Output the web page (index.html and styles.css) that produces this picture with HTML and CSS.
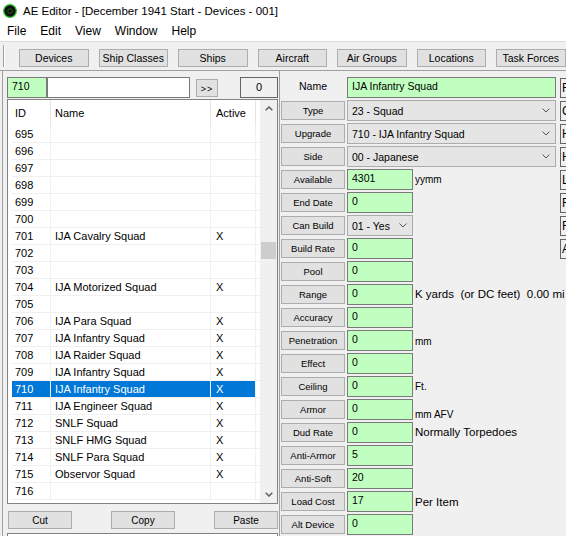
FILE: index.html
```html
<!DOCTYPE html>
<html lang="en">

<head>
    <meta charset="UTF-8">
    <title>AE Editor</title>
    <link rel="stylesheet" href="styles.css">
</head>

<body>
    <div class="titlebar">
        <svg class="app-icon" width="14" height="14" viewBox="0 0 14 14">
            <circle cx="7" cy="7" r="6.3" fill="#111" stroke="#2ec42e" stroke-width="1.2" />
            <circle cx="7" cy="7" r="2.2" fill="#050505" stroke="#1f7a1f" stroke-width="0.9" />
        </svg>
        <span class="title-text">AE Editor - [December 1941 Start - Devices - 001]</span>
    </div>

    <div class="menubar">
        <span class="menu-item">File</span>
        <span class="menu-item">Edit</span>
        <span class="menu-item">View</span>
        <span class="menu-item">Window</span>
        <span class="menu-item">Help</span>
    </div>

    <div class="toolbar">
        <div class="grip"></div>
        <div class="tb-buttons">
            <div class="btn tb-btn">Devices</div>
            <div class="btn tb-btn">Ship Classes</div>
            <div class="btn tb-btn">Ships</div>
            <div class="btn tb-btn">Aircraft</div>
            <div class="btn tb-btn">Air Groups</div>
            <div class="btn tb-btn">Locations</div>
            <div class="btn tb-btn">Task Forces</div>
        </div>
    </div>

    <div class="main">
        <div class="left-pane">
            <div class="search-row">
                <div class="field green id-field">710</div>
                <div class="field search-box"></div>
                <div class="btn next-btn">&gt;&gt;</div>
                <div class="count-box">0</div>
            </div>

            <div class="list">
                <div class="list-body">
                    <div class="list-head">
                        <div class="c-id">ID</div>
                        <div class="c-name">Name</div>
                        <div class="c-active">Active</div>
                        <div class="c-fill"></div>
                    </div>
                    <div id="rows"></div>
                </div>
                <div class="scrollbar">
                    <div class="sb-arrow">
                        <svg width="8" height="5" viewBox="0 0 8 5">
                            <polyline points="0.7,4.3 4,1 7.3,4.3" fill="none" stroke="#606060" stroke-width="1.5" />
                        </svg>
                    </div>
                    <div class="sb-thumb"></div>
                    <div class="sb-arrow sb-down">
                        <svg width="8" height="5" viewBox="0 0 8 5">
                            <polyline points="0.7,0.7 4,4 7.3,0.7" fill="none" stroke="#606060" stroke-width="1.5" />
                        </svg>
                    </div>
                </div>
            </div>

            <div class="edit-buttons">
                <div class="btn edit-btn">Cut</div>
                <div class="btn edit-btn">Copy</div>
                <div class="btn edit-btn">Paste</div>
            </div>
            <div class="bottom-box"></div>
        </div>

        <div class="right-pane">
            <div class="form">
                <div class="name-label">Name</div>
                <div class="field green wide">IJA Infantry Squad</div>
                <div class="strip">F</div>

                <div class="btn label">Type</div>
                <div class="select wide"><span>23 - Squad</span><svg width="8" height="5" viewBox="0 0 8 5"><polyline points="0.5,0.5 4,4 7.5,0.5" fill="none" stroke="#555" /></svg></div>
                <div class="strip">C</div>

                <div class="btn label">Upgrade</div>
                <div class="select wide"><span>710 - IJA Infantry Squad</span><svg width="8" height="5" viewBox="0 0 8 5"><polyline points="0.5,0.5 4,4 7.5,0.5" fill="none" stroke="#555" /></svg></div>
                <div class="strip">H</div>

                <div class="btn label">Side</div>
                <div class="select wide"><span>00 - Japanese</span><svg width="8" height="5" viewBox="0 0 8 5"><polyline points="0.5,0.5 4,4 7.5,0.5" fill="none" stroke="#555" /></svg></div>
                <div class="strip">H</div>

                <div class="btn label">Available</div>
                <div class="field green">4301</div>
                <div class="note small short">yymm</div>
                <div class="strip">L</div>

                <div class="btn label">End Date</div>
                <div class="field green">0</div>
                <div class="strip">F</div>

                <div class="btn label">Can Build</div>
                <div class="select"><span>01 - Yes</span><svg width="8" height="5" viewBox="0 0 8 5"><polyline points="0.5,0.5 4,4 7.5,0.5" fill="none" stroke="#555" /></svg></div>
                <div class="strip">F</div>

                <div class="btn label">Build Rate</div>
                <div class="field green">0</div>
                <div class="strip">A</div>

                <div class="btn label">Pool</div>
                <div class="field green">0</div>

                <div class="btn label">Range</div>
                <div class="field green">0</div>
                <div class="note">K yards &nbsp;(or DC feet) &nbsp;0.00 mi</div>

                <div class="btn label">Accuracy</div>
                <div class="field green">0</div>

                <div class="btn label">Penetration</div>
                <div class="field green">0</div>
                <div class="note small low">mm</div>

                <div class="btn label">Effect</div>
                <div class="field green">0</div>

                <div class="btn label">Ceiling</div>
                <div class="field green">0</div>
                <div class="note small">Ft.</div>

                <div class="btn label">Armor</div>
                <div class="field green">0</div>
                <div class="note small lower">mm AFV</div>

                <div class="btn label">Dud Rate</div>
                <div class="field green">0</div>
                <div class="note">Normally Torpedoes</div>

                <div class="btn label">Anti-Armor</div>
                <div class="field green">5</div>

                <div class="btn label">Anti-Soft</div>
                <div class="field green">20</div>

                <div class="btn label">Load Cost</div>
                <div class="field green">17</div>
                <div class="note low">Per Item</div>

                <div class="btn label">Alt Device</div>
                <div class="field green">0</div>
            </div>
        </div>
    </div>

    <script>
        const devices = {
            701: 'IJA Cavalry Squad',
            704: 'IJA Motorized Squad',
            706: 'IJA Para Squad',
            707: 'IJA Infantry Squad',
            708: 'IJA Raider Squad',
            709: 'IJA Infantry Squad',
            710: 'IJA Infantry Squad',
            711: 'IJA Engineer Squad',
            712: 'SNLF Squad',
            713: 'SNLF HMG Squad',
            714: 'SNLF Para Squad',
            715: 'Observor Squad'
        };
        const selectedId = 710;
        const rowsElement = document.getElementById('rows');

        for (let id = 695; id <= 716; id++) {
            const name = devices[id] || '';
            const row = document.createElement('div');
            row.className = 'list-row' + (id === selectedId ? ' selected' : '');
            row.innerHTML =
                `<div class="c-id">${id}</div>` +
                `<div class="c-name">${name}</div>` +
                `<div class="c-active">${name ? 'X' : ''}</div>` +
                `<div class="c-fill"></div>`;
            rowsElement.appendChild(row);
        }
    </script>
</body>

</html>
```

FILE: styles.css
```css
* {
    box-sizing: border-box;
}

body {
    margin: 0;
    width: 566px;
    height: 536px;
    overflow: hidden;
    background-color: #f0f0f0;
    font-family: "Liberation Sans", Arial, sans-serif;
    font-size: 11px;
    color: #000;
}

/* window chrome */

.titlebar {
    height: 22px;
    background-color: #fff;
    display: flex;
    align-items: center;
    padding-left: 3px;
    font-size: 11.5px;
}

.app-icon {
    margin-right: 6px;
}

.menubar {
    height: 19px;
    background-color: #fff;
    display: flex;
    font-size: 12px;
    line-height: 19px;
}

.menu-item {
    padding: 0 7px;
}

.toolbar {
    height: 30px;
    border-top: 1px solid #dadada;
    border-bottom: 1px solid #a0a0a0;
    display: flex;
    align-items: flex-start;
    padding-left: 3px;
}

.grip {
    width: 2px;
    height: 22px;
    margin-top: 3px;
    border-left: 1px solid #a0a0a0;
    border-right: 1px solid #fff;
}

.tb-buttons {
    display: flex;
    gap: 10px;
    margin-left: 14px;
    margin-top: 7px;
}

.btn {
    background-color: #e1e1e1;
    border: 1px solid #adadad;
    display: flex;
    justify-content: center;
    align-items: center;
    white-space: nowrap;
}

.tb-btn {
    width: 69.5px;
    height: 18px;
    font-size: 10.5px;
}

/* main area */

.main {
    height: 465px;
    display: flex;
    overflow: hidden;
}

.left-pane {
    flex: none;
    width: 278px;
    margin-left: 2px;
    border-left: 1px solid #a0a0a0;
    border-right: 1px solid #a0a0a0;
    padding: 6px 1px 0 4px;
}

.search-row {
    height: 21px;
    display: flex;
    align-items: center;
}

.field {
    height: 21px;
    border: 1px solid #7a7a7a;
    padding-left: 4px;
    font-size: 10.5px;
    line-height: 17px;
    white-space: nowrap;
    overflow: hidden;
}

.field.green {
    background-color: #c0ffc0;
}

.id-field {
    width: 40px;
}

.search-box {
    width: 143px;
    background-color: #fff;
}

.next-btn {
    width: 22px;
    height: 18px;
    margin-left: 6px;
    font-size: 9px;
    letter-spacing: 1px;
    padding-top: 3px;
}

.count-box {
    width: 38px;
    height: 21px;
    margin-left: auto;
    border: 1px solid #646464;
    text-align: center;
    line-height: 19px;
    font-size: 11px;
}

/* device list */

.list {
    margin-top: 1px;
    height: 405px;
    border: 1px solid #828282;
    background-color: #fff;
    display: flex;
    padding-left: 4px;
}

.list-body {
    width: 248px;
    overflow: hidden;
}

.list-head,
.list-row {
    display: flex;
}

.list-head > div {
    height: 26px;
    line-height: 26px;
    border-right: 1px solid #e5e5e5;
}

.list-row > div {
    height: 17px;
    line-height: 16px;
    border-right: 1px solid #f0f0f0;
    border-bottom: 1px solid #f0f0f0;
    white-space: nowrap;
}

.c-id {
    width: 39px;
    padding-left: 3px;
}

.c-name {
    width: 160px;
    padding-left: 4px;
}

.c-active {
    width: 45px;
    padding-left: 5px;
}

.list-head > .c-fill,
.list-row > .c-fill {
    width: 4px;
    border-right: none;
}

.list-row.selected .c-id,
.list-row.selected .c-name,
.list-row.selected .c-active {
    background-color: #0078d7;
    color: #fff;
}

.scrollbar {
    width: 17px;
    background-color: #f0f0f0;
    display: flex;
    flex-direction: column;
}

.sb-arrow {
    height: 17px;
    display: flex;
    justify-content: center;
    align-items: center;
}

.sb-down {
    margin-top: auto;
}

.sb-thumb {
    width: 15px;
    height: 17px;
    margin: 125px 0 0 1px;
    background-color: #cdcdcd;
}

.edit-buttons {
    margin-top: 7px;
    display: flex;
    justify-content: space-between;
    padding-left: 1px;
}

.edit-btn {
    width: 64px;
    height: 18px;
    font-size: 10px;
}

.bottom-box {
    margin-top: 4px;
    height: 20px;
    border: 1px solid #828282;
    background-color: #fff;
}

/* device form */

.right-pane {
    flex: none;
    padding: 6px 0 0 1px;
}

.form {
    display: grid;
    grid-template-columns: 64px 66px 141px 30px;
    grid-auto-rows: 21px;
    column-gap: 2px;
    row-gap: 2px;
}

.name-label,
.label {
    grid-column: 1;
}

.name-label {
    text-align: center;
    line-height: 19px;
    font-size: 10.5px;
}

.label {
    height: 19px;
    align-self: center;
    font-size: 9.5px;
}

.wide {
    grid-column: 2 / 4;
}

.select {
    height: 21px;
    background-color: #e5e5e5;
    border: 1px solid #acacac;
    display: flex;
    justify-content: space-between;
    align-items: center;
    padding: 0 5px 0 4px;
    font-size: 10.5px;
    white-space: nowrap;
}

.note {
    grid-column: 3 / 5;
    line-height: 21px;
    font-size: 11.5px;
    white-space: nowrap;
}

.note.short {
    grid-column: 3;
}

.note.small {
    font-size: 10px;
}

.note.low {
    padding-top: 1px;
}

.note.lower {
    padding-top: 5px;
}

.strip {
    grid-column: 4;
    height: 20px;
    align-self: end;
    margin-left: 2px;
    border: 1px solid #646464;
    border-right: none;
    padding-left: 1px;
    font-size: 12px;
    line-height: 18px;
    overflow: hidden;
}
```
